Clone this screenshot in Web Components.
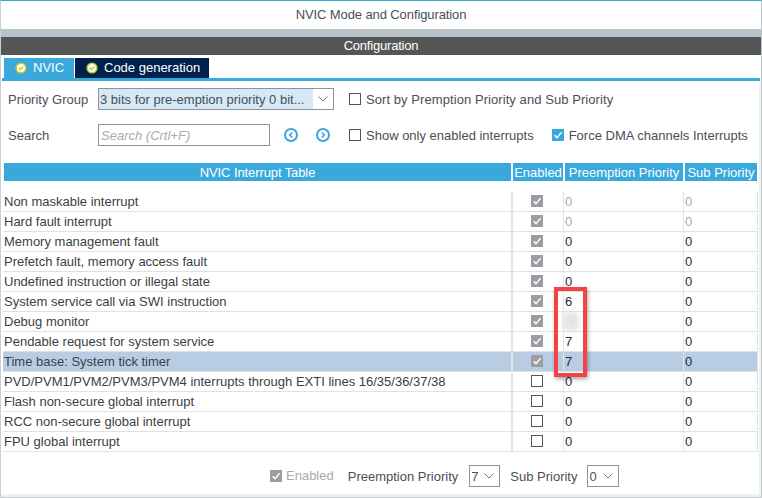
<!DOCTYPE html>
<html><head><meta charset="utf-8"><title>NVIC Mode and Configuration</title>
<style>
html,body{margin:0;padding:0;background:#fff}
body{width:762px;height:498px;overflow:hidden;font:13px "Liberation Sans",Arial,sans-serif;color:#4a4f55}
</style></head><body>
<nvic-window></nvic-window>
<script>
const chk=`<svg viewBox="0 0 12 12" width="12" height="12"><path d="M2.6 6.2 5 8.6 9.6 3.2" fill="none" stroke="currentColor" stroke-width="1.4"/></svg>`;
class NvicCheck extends HTMLElement{
  connectedCallback(){
    const k=this.getAttribute('kind')||'off';
    const bg={off:'#fff',gray:'#9a9da1',blue:'#39a9dc'}[k];
    const gap=this.getAttribute('gap')||5;
    this.attachShadow({mode:'open'}).innerHTML=`<style>
    :host{display:inline-flex;align-items:center;gap:${gap}px}
    .b{width:12px;height:12px;box-sizing:border-box;background:${bg};color:#fff;flex:none;${k==='off'?'border:1px solid #555;':''}line-height:0}
    ::slotted(span){position:relative;top:-1px}
    </style><span class="b">${k==='off'?'':chk}</span><slot></slot>`;
  }
}
customElements.define('nvic-check',NvicCheck);
class NvicSelect extends HTMLElement{
  connectedCallback(){
    const w=this.getAttribute('w')||31, hl=this.hasAttribute('hl');
    this.attachShadow({mode:'open'}).innerHTML=`<style>
    :host{display:inline-flex;box-sizing:border-box;width:${w}px;height:22px;border:1px solid #8f9296;background:#fff;align-items:stretch;color:#4a4f55;flex:none}
    .v{flex:1;display:flex;align-items:center;padding-left:1px;white-space:nowrap;overflow:hidden;${hl?'background:#d6e8f6;':''}}
    .a{width:20px;flex:none;display:flex;align-items:center;justify-content:center;color:#777}
    </style><span class="v"><slot></slot></span><span class="a"><svg width="10" height="6" viewBox="0 0 10 6"><path d="M.5.5 5 5 9.5.5" fill="none" stroke="currentColor"/></svg></span>`;
  }
}
customElements.define('nvic-select',NvicSelect);
class NvicTab extends HTMLElement{
  connectedCallback(){
    const a=this.hasAttribute('active');
    this.attachShadow({mode:'open'}).innerHTML=`<style>
    :host{display:flex;align-items:center;height:20px;box-sizing:border-box;color:#fff;white-space:nowrap;background:${a?'#39a9dc':'#00204e'};padding:0 11px;gap:6px;width:${a?70:134}px}
    svg{display:block;flex:none}
    span{padding-bottom:2px}
    </style><svg width="12" height="12" viewBox="0 0 12 12"><circle cx="6" cy="6" r="5.6" fill="#c4cc1e"/><circle cx="6" cy="6" r="4" fill="#fff"/><path d="M3.7 6 5.4 7.7 8.3 4.5" fill="none" stroke="#c4cc1e" stroke-width="1.3"/></svg><span><slot></slot></span>`;
  }
}
customElements.define('nvic-tab',NvicTab);
class NvicRow extends HTMLElement{
  connectedCallback(){
    const c=this.getAttribute('check')||'gray', p=this.getAttribute('p')??'0', s=this.getAttribute('s')??'0';
    const dim=this.hasAttribute('dim'), sel=this.hasAttribute('sel'), blur=this.hasAttribute('blur');
    this.attachShadow({mode:'open'}).innerHTML=`<style>
    :host{display:grid;grid-template-columns:508px 52px 120px 74px;height:20px;box-sizing:border-box;border-bottom:1px solid #e1e1e1;color:#3a3f45;background:${sel?'#b8cde3':'transparent'}}
    div{display:flex;align-items:center;height:19px;box-sizing:border-box;white-space:nowrap}
    .n{padding-left:1px}
    .e{justify-content:center;border-left:2px solid #e4e4e4;box-sizing:border-box;padding-right:3px}
    .p,.s{border-left:1px solid #e4e4e4;padding-left:1px;${dim?'color:#a8aab2;':'color:#232a3a;'}}
    .bl{display:block;width:16px;height:19px;margin-left:-2px;background:#e4e4e4;filter:blur(3px)}
    .c{width:12px;height:12px;box-sizing:border-box;line-height:0;color:#fff;margin-bottom:1px;${c==='gray'?'background:#9a9da1':'border:1px solid #555;background:#fff'}}
    </style><div class="n"><slot></slot></div><div class="e"><span class="c">${c==='gray'?chk:''}</span></div><div class="p">${blur?'<span class="bl"></span>':p}</div><div class="s">${s}</div>`;
  }
}
customElements.define('nvic-row',NvicRow);
class NvicTable extends HTMLElement{
  connectedCallback(){
    this.attachShadow({mode:'open'}).innerHTML=`<style>
    :host{display:block;position:relative;margin-left:2px;width:755px}
    .h{display:grid;grid-template-columns:507px 50px 118px 72px;column-gap:2px;margin-left:1px;height:18px;color:#fff}
    .h span{background:#39a9dc;display:flex;align-items:center;justify-content:center;white-space:nowrap;box-sizing:border-box}
    .h span:first-child{letter-spacing:-.1px}
    .body{margin-top:11px;display:block;border-right:1px solid #e1e1e1;width:755px;box-sizing:border-box}
    .mark{position:absolute;left:551px;top:124px;width:33px;height:90px;box-sizing:border-box;border:4px solid #f44347;box-shadow:1px 2px 4px rgba(0,0,0,.35);pointer-events:none}
    </style><div class="h"><span>NVIC Interrupt Table</span><span>Enabled</span><span>Preemption Priority</span><span>Sub Priority</span></div>
    <div class="body"><slot></slot></div><div class="mark"></div>`;
  }
}
customElements.define('nvic-table',NvicTable);
class NvicWindow extends HTMLElement{
  connectedCallback(){
    const rows=[
     ['Non maskable interrupt','gray','0',1],['Hard fault interrupt','gray','0',1],['Memory management fault','gray','0'],['Prefetch fault, memory access fault','gray','0'],['Undefined instruction or illegal state','gray','0'],['System service call via SWI instruction','gray','6'],['Debug monitor','gray','b'],['Pendable request for system service','gray','7'],['Time base: System tick timer','gray','7',0,1],['PVD/PVM1/PVM2/PVM3/PVM4 interrupts through EXTI lines 16/35/36/37/38','off','0'],['Flash non-secure global interrupt','off','0'],['RCC non-secure global interrupt','off','0'],['FPU global interrupt','off','0']
    ].map(r=>`<nvic-row check="${r[1]}" p="${r[2]}" ${r[3]?'dim':''} ${r[4]?'sel':''} ${r[2]==='b'?'blur':''}>${r[0]}</nvic-row>`).join('');
    this.attachShadow({mode:'open'}).innerHTML=`<style>
    :host{display:flex;flex-direction:column;width:762px;height:498px;box-sizing:border-box;border-top:1px solid #39a9dc;border-left:1px solid #c5d0d6;border-right:1px solid #bcc5ca;border-bottom:1px solid #c5ced3;background:#fff;color:#4a4f55}
    .title{height:27px;padding-bottom:1px;display:flex;align-items:center;justify-content:center;letter-spacing:-.1px;flex:none}
    .band{height:8px;background:#b8c4ca;flex:none}
    .conf{height:18px;padding-bottom:1px;box-sizing:border-box;background:#555756;color:#fff;display:flex;align-items:center;justify-content:center;letter-spacing:-.2px;flex:none}
    .tabs{display:flex;gap:1px;padding:3px 0 0 3px;flex:none}
    .line{height:3px;background:#39a9dc;margin-left:1px;width:758px;flex:none}
    .lower{flex:1;border-right:2px solid #eef0f1;min-height:0}
    .tools{display:grid;grid-template-columns:90px 172px 78px auto;grid-template-rows:22px 22px;row-gap:14px;padding:7px 0 0 7px;align-items:center}
    .sr{display:flex;align-items:center}
    .input{box-sizing:border-box;width:172px;height:22px;border:1px solid #8f9296;display:flex;align-items:center;padding-left:2px;color:#aaa;font-style:italic}
    .nav{display:flex;gap:18px;padding-left:14px;align-items:center}
    .r2{display:flex;gap:18px;align-items:center}
    svg{display:block}
    .foot{display:flex;align-items:center;padding:13px 0 0 269px;height:22px}
    .en{color:#aaa;margin-right:14px}
    .ft{margin-right:11px}
    .tail{height:3px;background:#f0f0f0;flex:none}
    nvic-table{margin-top:17px}
    </style>
    <div class="title">NVIC Mode and Configuration</div>
    <div class="band"></div>
    <div class="conf">Configuration</div>
    <div class="tabs"><nvic-tab active>NVIC</nvic-tab><nvic-tab>Code generation</nvic-tab></div>
    <div class="line"></div>
    <div class="lower">
    <div class="tools">
      <span>Priority Group</span>
      <div class="sr" style="grid-column:2/4"><nvic-select w="236" hl>3 bits for pre-emption priority 0 bit...</nvic-select></div>
      <nvic-check style="margin-left:1px;letter-spacing:.07px">Sort by Premption Priority and Sub Priority</nvic-check>
      <span>Search</span>
      <div class="input">Search (Crtl+F)</div>
      <div class="nav">
        <svg width="14" height="14" viewBox="0 0 14 14"><circle cx="7" cy="7" r="6" fill="none" stroke="#39a9dc" stroke-width="2"/><path d="M8.2 4.5 5.7 7l2.5 2.5" fill="none" stroke="#39a9dc" stroke-width="1.6"/></svg>
        <svg width="14" height="14" viewBox="0 0 14 14"><circle cx="7" cy="7" r="6" fill="none" stroke="#39a9dc" stroke-width="2"/><path d="M5.8 4.5 8.3 7 5.8 9.5" fill="none" stroke="#39a9dc" stroke-width="1.6"/></svg>
      </div>
      <div class="r2" style="margin-left:1px"><nvic-check>Show only enabled interrupts</nvic-check><nvic-check kind="blue">Force DMA channels Interrupts</nvic-check></div>
    </div>
    <nvic-table>${rows}</nvic-table>
    <div class="foot">
      <nvic-check kind="gray" class="en" gap="4"><span>Enabled</span></nvic-check>
      <span class="ft">Preemption Priority</span><nvic-select w="31">7</nvic-select>
      <span class="ft" style="margin-left:10px;margin-right:10px">Sub Priority</span><nvic-select w="32">0</nvic-select>
    </div>
    </div>
    <div class="tail"></div>`;
  }
}
customElements.define('nvic-window',NvicWindow);
</script>
</body></html>
